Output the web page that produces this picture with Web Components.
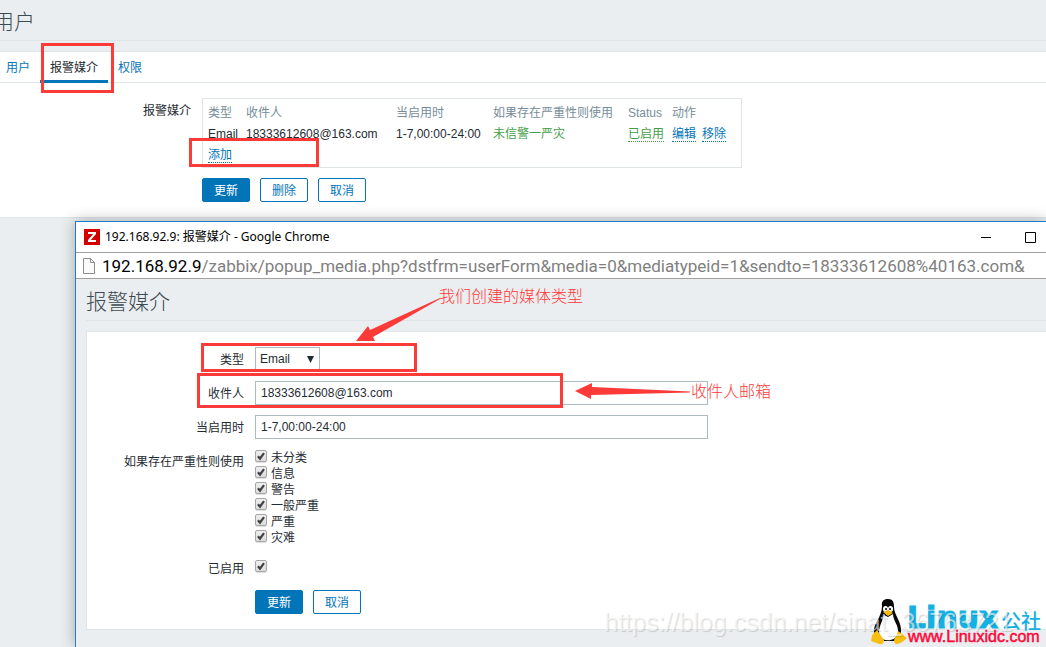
<!DOCTYPE html>
<html lang="zh-CN">
<head>
<meta charset="utf-8">
<title>报警媒介</title>
<style>
html, body { margin: 0; min-height: 100%; }
body {
  --sans: "Liberation Sans", "Noto Sans CJK SC", sans-serif;
  --ui: "Noto Sans", "Noto Sans CJK SC", sans-serif;
  --blue: #0275b8; --line: #dfe4e7; --page: #ebeef0; --red: #fc3a38;
  background: var(--page); color: #1f2c33; font: 12px/16px var(--sans);
  min-height: 100vh; position: relative; overflow: hidden;
}
</style>
</head>
<body>
<user-page></user-page>
<browser-popup></browser-popup>
<annotation-layer></annotation-layer>
<site-mark></site-mark>
<script>
function define(name, html) {
  const t = document.createElement('template');
  t.innerHTML = html;
  customElements.define(name, class extends HTMLElement {
    constructor() {
      super();
      this.attachShadow({ mode: 'open' }).append(t.content.cloneNode(true));
    }
  });
}

customElements.define('z-button', class extends HTMLElement {
  constructor() {
    super();
    this.attachShadow({ mode: 'open' }).innerHTML = `
<style>
:host { display: block; }
button { width: 48px; height: 24px; padding: 2px 0 0; border: 1px solid var(--blue); border-radius: 2px;
  background: #fff; color: var(--blue); font: 12px/20px var(--sans); display: block; }
:host([primary]) button { background: var(--blue); color: #fff; }
</style><button type="button"><slot></slot></button>`;
  }
});

customElements.define('z-check', class extends HTMLElement {
  constructor() {
    super();
    this.attachShadow({ mode: 'open' }).innerHTML = `
<style>
:host { display: block; height: 16px; }
label { display: flex; gap: 4px; line-height: 16px; }
.box { display: grid; width: 12px; height: 12px; }
.box > * { grid-area: 1 / 1; }
input { appearance: none; box-sizing: border-box; margin: 0; width: 12px; height: 12px; border: 1px solid #a6a6a6;
  border-radius: 2px; background: linear-gradient(#eee, #dcdcdc); box-shadow: 0 1px 1px #ddd; }
svg { pointer-events: none; }
</style><label><span class="box"><input type="checkbox" checked><svg width="12" height="12" viewBox="0 0 12 12"><path d="M3 6.2L5 8.6L9 3.2" fill="none" stroke="#404040" stroke-width="2.2"/></svg></span><slot></slot></label>`;
    const label = this.getAttribute('label');
    if (label) this.shadowRoot.querySelector('input').setAttribute('aria-label', label);
  }
});

define('media-table', `
<style>
:host { display: block; border: 1px solid var(--line); box-sizing: border-box; width: 540px; height: 70px; padding: 3px 5px; }
table { border-collapse: collapse; table-layout: fixed; width: 528px; }
th, td { padding: 0; height: 21px; text-align: left; font-weight: normal; white-space: nowrap; }
th { color: #768d99; }
a { color: var(--blue); text-decoration: none; border-bottom: 1px dotted; }
.on { color: #429e47; }
.acts a + a { margin-left: 6px; }
</style>
<table>
<colgroup><col style="width:38px"><col style="width:150px"><col style="width:97px"><col style="width:135px"><col style="width:44px"><col></colgroup>
<thead><tr><th>类型</th><th>收件人</th><th>当启用时</th><th>如果存在严重性则使用</th><th>Status</th><th>动作</th></tr></thead>
<tbody><tr><td>Email</td><td>18333612608@163.com</td><td>1-7,00:00-24:00</td><td class="on">未信警一严灾</td><td><a class="on" href="#">已启用</a></td><td class="acts"><a href="#">编辑</a><a href="#">移除</a></td></tr>
<tr><td colspan="6"><a href="#">添加</a></td></tr></tbody>
</table>`);

define('user-page', `
<style>
:host { display: block; }
header { height: 40px; border-bottom: 1px solid var(--line); }
h1 { margin: 0 0 0 -7px; font: 300 21px/43px var(--sans); color: #3c4a52; }
main { margin-top: 10px; background: #fff; border: solid var(--line); border-width: 1px 0; }
nav { display: flex; height: 30px; border-bottom: 1px solid var(--line); }
nav a { color: var(--blue); text-decoration: none; line-height: 32px; padding: 0 10px; }
nav a:first-child { padding-left: 6px; }
nav a.active { color: #1f2c33; border-bottom: 3px solid var(--blue); height: 28px; }
section { display: grid; grid-template-columns: 191px 1fr; column-gap: 11px; row-gap: 10px; padding: 15px 0; }
.label { text-align: right; line-height: 26px; }
.buttons { grid-column: 2; display: flex; gap: 10px; }
</style>
<header><h1>用户</h1></header>
<main>
<nav><a href="#">用户</a><a href="#" class="active">报警媒介</a><a href="#">权限</a></nav>
<section><span class="label">报警媒介</span><media-table></media-table>
<div class="buttons"><z-button primary>更新</z-button><z-button>删除</z-button><z-button>取消</z-button></div></section>
</main>`);

define('media-form', `
<style>
:host { display: block; background: #fff; border: solid var(--line); border-width: 1px 0 1px 1px; padding: 15px 0; }
form { display: grid; grid-template-columns: 157px 1fr; column-gap: 11px; row-gap: 10px; }
.label { text-align: right; line-height: 26px; height: 24px; }
.pick { display: grid; width: 65px; height: 24px; }
.pick > * { grid-area: 1 / 1; }
.pick svg { justify-self: end; align-self: center; margin-right: 6px; pointer-events: none; }
select, input { box-sizing: border-box; height: 24px; margin: 0; border: 1px solid #acbbc2; border-radius: 0;
  background: #fff; color: #1f2c33; font: 12px/16px var(--sans); }
select { appearance: none; width: 65px; padding: 0 4px; }
input { width: 453px; max-width: 100%; padding: 0 5px; }
.buttons { grid-column: 2; display: flex; gap: 10px; }
.checks { padding-top: 1px; }
.enabled { padding-top: 4px; }
</style>
<form>
<label class="label" for="type">类型</label><span class="pick"><select id="type"><option>Email</option></select><svg width="7" height="7"><path d="M0 0H7L3.500 7Z" fill="#1f2c33"/></svg></span>
<label class="label" for="to">收件人</label><input id="to" type="text" value="18333612608@163.com">
<label class="label" for="when">当启用时</label><input id="when" type="text" value="1-7,00:00-24:00">
<span class="label">如果存在严重性则使用</span><div class="checks"><z-check>未分类</z-check><z-check>信息</z-check><z-check>警告</z-check><z-check>一般严重</z-check><z-check>严重</z-check><z-check>灾难</z-check></div>
<span class="label">已启用</span><div class="enabled"><z-check label="已启用"></z-check></div>
<div class="buttons"><z-button primary>更新</z-button><z-button>取消</z-button></div>
</form>`);

define('browser-popup', `
<style>
:host { display: block; position: absolute; left: 75px; right: 0; top: 221px; bottom: 0; background: var(--page);
  border: solid #1a7fd0; border-width: 1px 0 0 1px; box-shadow: 0 0 14px rgba(0,0,0,.3); overflow: visible; }
.title { height: 30px; background: #fff; border-bottom: 1px solid #a0a0a0; display: flex; align-items: center;
  gap: 5px; padding: 0 10px 0 8px; color: #000; font: 12px/16px var(--ui); }
.title span { flex: 1; }
.title .win { margin-left: 28px; }
.url { height: 25px; background: #fff; border-bottom: 1px solid #a0a0a0; display: flex; align-items: center; gap: 7px;
  padding-left: 7px; font: 17px/24px Roboto, sans-serif; color: #808080; white-space: nowrap; overflow: hidden; }
.url svg { flex: none; }
.url b { font-weight: normal; color: #000; }
.body { padding-left: 10px; }
h1 { margin: 0 0 10px; height: 41px; border-bottom: 1px solid var(--line); font: 300 21px/46px var(--sans); color: #3c4a52; }
</style>
<div class="title"><svg width="16" height="16"><rect width="16" height="16" fill="#d40000"/><path d="M4 3H12V5L6.800 11H12V13H4V11L9.200 5H4Z" fill="#fff"/></svg><span>192.168.92.9: 报警媒介 - Google Chrome</span>
<svg width="11" height="11"><path d="M0 5.500H10" stroke="#000"/></svg><svg class="win" width="11" height="11"><path d="M.5.5H10.500V10.500H.5Z" fill="none" stroke="#000"/></svg></div>
<div class="url"><svg width="12" height="16"><path d="M.5.5H7.500L11.500 4.500V15.500H.5ZM7.500.5V4.500H11.500" fill="#fafafa" stroke="#8c8c8c"/></svg><span><b>192.168.92.9</b>/zabbix/popup_media.php?dstfrm=userForm&amp;media=0&amp;mediatypeid=1&amp;sendto=18333612608%40163.com&amp;</span></div>
<div class="body"><h1>报警媒介</h1><media-form></media-form></div>`);

define('annotation-layer', `
<style>
:host { position: absolute; left: 0; top: 0; width: 100%; height: 100%; pointer-events: none; }
svg { position: absolute; left: 0; top: 0; width: 100%; height: 100%; }
p { position: absolute; margin: 0; color: var(--red); font: 300 16px/20px var(--sans); white-space: nowrap; }
</style>
<svg><g fill="none" stroke="#fc3a38" stroke-width="3"><path d="M42.500 44.500H112.500V91.500H42.500Z"/><path d="M190.500 139.500H317.500V165.500H190.500Z"/><path d="M202.500 344.500H415.500V370.500H202.500Z"/><path d="M198.500 374.500H561.500V406.500H198.500Z"/></g>
<g fill="#fc3a38"><path d="M356 341L368 326L370 330L440 298V299L373 337L375 341Z"/><path d="M575 391L592 383V387L690 391.500V392.500L591 395V399Z"/></g></svg>
<p style="left:439px;top:287px">我们创建的媒体类型</p><p style="left:691px;top:382px">收件人邮箱</p>`);

define('site-mark', `
<style>
:host { position: absolute; right: 0; bottom: 0; width: 450px; height: 50px; pointer-events: none; }
div, svg { position: absolute; white-space: nowrap; }
svg { left: 274px; top: 1px; }
.name { left: 311px; top: 4px; color: #14b1e2; font: 900 30px/34px "DejaVu Sans", sans-serif; -webkit-text-stroke: 1px; }
.cn { left: 405px; top: 12px; color: #14b1e2; font: 500 20px/24px "Noto Sans CJK SC", sans-serif; }
.site { left: 312px; top: 31px; color: #ff0738; font: 16px/18px var(--sans); -webkit-text-stroke: 0.5px; }
.mark { left: 8px; top: 9px; color: rgba(255,255,255,.6); text-shadow: 1px 1px 1px rgba(0,0,0,.15); font: 25px/32px var(--sans); }
</style>
<svg width="38" height="48" viewBox="0 0 38 48"><path d="M12 8C11 2 15 1 18 1C23 1 24 4 24 9C24 17 32 24 31 34L26 43H10L4 34C3 26 12 19 12 8Z" fill="#080808"/><path d="M14 17L18 19L23 16C23 23 29 27 28 35C27 43 13 45 10 38C7 31 12 25 14 17Z" fill="#fff"/><ellipse cx="15.500" cy="11" rx="2.500" ry="3" fill="#fff"/><ellipse cx="20.500" cy="11" rx="2.500" ry="3" fill="#fff"/><circle cx="16" cy="11" r="1"/><circle cx="20" cy="11" r="1"/><path d="M13 14L18 12L23 15L18 18Z" fill="#f9b90b"/><path d="M7 32L14 42Q14 47 9 46L1 43L2 37ZM28 33L37 40Q31 46 26 46Q22 44 26 38Z" fill="#f9be14"/></svg>
<div class="name">Linux</div><div class="cn">公社</div><div class="mark">https://blog.csdn.net/sinat_36763721</div><div class="site">www.Linuxidc.com</div>`);
</script>
</body>
</html>
